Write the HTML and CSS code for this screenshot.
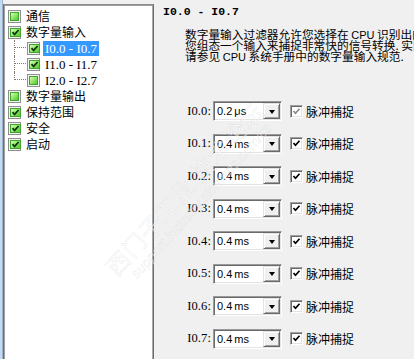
FILE: index.html
```html
<!DOCTYPE html>
<html lang="zh">
<head>
<meta charset="utf-8">
<link rel="stylesheet" href="styles.css">
</head>
<body>
<div class="app">
  <div class="strip"></div>
  <div class="tree">
    <div class="node"><span class="tcb"><span class="in"></span></span><span class="lbl">通信</span></div>
    <div class="node"><span class="tcb on"><span class="in"><svg viewBox="0 0 9 9"><path d="M1.5 4.2 L3.6 6.4 L7.6 2" /></svg></span></span><span class="lbl">数字量输入</span></div>
    <div class="node child"><span class="conn"><span class="h"></span></span><span class="tcb on"><span class="in"><svg viewBox="0 0 9 9"><path d="M1.5 4.2 L3.6 6.4 L7.6 2" /></svg></span></span><span class="lbl sel">I0.0 - I0.7</span></div>
    <div class="node child"><span class="conn"><span class="h"></span></span><span class="tcb on"><span class="in"><svg viewBox="0 0 9 9"><path d="M1.5 4.2 L3.6 6.4 L7.6 2" /></svg></span></span><span class="lbl">I1.0 - I1.7</span></div>
    <div class="node child last"><span class="conn"><span class="h"></span></span><span class="tcb"><span class="in"></span></span><span class="lbl">I2.0 - I2.7</span></div>
    <div class="node"><span class="tcb"><span class="in"></span></span><span class="lbl">数字量输出</span></div>
    <div class="node"><span class="tcb on"><span class="in"><svg viewBox="0 0 9 9"><path d="M1.5 4.2 L3.6 6.4 L7.6 2" /></svg></span></span><span class="lbl">保持范围</span></div>
    <div class="node"><span class="tcb on"><span class="in"><svg viewBox="0 0 9 9"><path d="M1.5 4.2 L3.6 6.4 L7.6 2" /></svg></span></span><span class="lbl">安全</span></div>
    <div class="node"><span class="tcb on"><span class="in"><svg viewBox="0 0 9 9"><path d="M1.5 4.2 L3.6 6.4 L7.6 2" /></svg></span></span><span class="lbl">启动</span></div>
  </div>
  <div class="main">
    <div class="title">I0.0 - I0.7</div>
    <div class="desc">
      <div class="ln">数字量输入过滤器允许您选择在 <span class="lat">CPU</span> 识别出的输入</div>
      <div class="ln">您组态一个输入来捕捉非常快的信号转换. 实际</div>
      <div class="ln">请参见 <span class="lat">CPU</span> 系统手册中的数字量输入规范.</div>
    </div>
    <div class="rows">
      <span class="io">I0.0:</span><span class="combo"><span class="val">0.2 μs</span><span class="btn"><span class="tri"></span></span></span><span class="ck dis"><svg viewBox="0 0 9 9"><path d="M1.5 4 L3.5 6.2 L7.5 1.8" /></svg></span><span class="pc">脉冲捕捉</span>
      <span class="io">I0.1:</span><span class="combo"><span class="val">0.4 ms</span><span class="btn"><span class="tri"></span></span></span><span class="ck"><svg viewBox="0 0 9 9"><path d="M1.5 4 L3.5 6.2 L7.5 1.8" /></svg></span><span class="pc">脉冲捕捉</span>
      <span class="io">I0.2:</span><span class="combo"><span class="val">0.4 ms</span><span class="btn"><span class="tri"></span></span></span><span class="ck"><svg viewBox="0 0 9 9"><path d="M1.5 4 L3.5 6.2 L7.5 1.8" /></svg></span><span class="pc">脉冲捕捉</span>
      <span class="io">I0.3:</span><span class="combo"><span class="val">0.4 ms</span><span class="btn"><span class="tri"></span></span></span><span class="ck"><svg viewBox="0 0 9 9"><path d="M1.5 4 L3.5 6.2 L7.5 1.8" /></svg></span><span class="pc">脉冲捕捉</span>
      <span class="io">I0.4:</span><span class="combo"><span class="val">0.4 ms</span><span class="btn"><span class="tri"></span></span></span><span class="ck"><svg viewBox="0 0 9 9"><path d="M1.5 4 L3.5 6.2 L7.5 1.8" /></svg></span><span class="pc">脉冲捕捉</span>
      <span class="io">I0.5:</span><span class="combo"><span class="val">0.4 ms</span><span class="btn"><span class="tri"></span></span></span><span class="ck"><svg viewBox="0 0 9 9"><path d="M1.5 4 L3.5 6.2 L7.5 1.8" /></svg></span><span class="pc">脉冲捕捉</span>
      <span class="io">I0.6:</span><span class="combo"><span class="val">0.4 ms</span><span class="btn"><span class="tri"></span></span></span><span class="ck"><svg viewBox="0 0 9 9"><path d="M1.5 4 L3.5 6.2 L7.5 1.8" /></svg></span><span class="pc">脉冲捕捉</span>
      <span class="io">I0.7:</span><span class="combo"><span class="val">0.4 ms</span><span class="btn"><span class="tri"></span></span></span><span class="ck"><svg viewBox="0 0 9 9"><path d="M1.5 4 L3.5 6.2 L7.5 1.8" /></svg></span><span class="pc">脉冲捕捉</span>
    </div>
  </div>
</div>
<div class="watermark">
  <div class="wm1">西门子工业 技术论坛</div>
  <div class="wm2">support.industry.siemens.com/cs</div>
</div>
</body>
</html>
```
FILE: styles.css
```css
html, body {
  margin: 0;
  padding: 0;
}
body {
  width: 414px;
  height: 359px;
  overflow: hidden;
  background: #f0f0f0;
  font-family: "Liberation Serif", "Noto Sans CJK SC", serif;
  color: #000;
  position: relative;
}
.app {
  display: flex;
  height: 359px;
}
.strip {
  width: 3px;
  flex: none;
  background: linear-gradient(90deg, #c4daf3 0, #c4daf3 2px, #9fb4cc 2px);
}
.tree {
  width: 151px;
  flex: none;
  margin-top: 4px;
  background: #fff;
  border-left: 1px solid #6d6d6d;
  border-top: 1px solid #8a8a8a;
  border-right: 1px solid #6d6d6d;
  box-shadow: inset 1px 1px 0 #a0a0a0, inset -1px 0 0 #a8a8a8;
  padding: 3px 0 0 2px;
  box-sizing: border-box;
  height: 355px;
}
.node {
  height: 16px;
  display: flex;
  align-items: center;
  font-size: 12px;
  line-height: 16px;
  white-space: nowrap;
}
.tcb {
  width: 13px;
  height: 13px;
  box-sizing: border-box;
  border: 1px solid #8e8f8f;
  background: #f4f4f4;
  padding: 1px;
  margin-left: 2px;
  flex: none;
  display: flex;
}
.tcb .in {
  flex: 1;
  border: 1px solid #3da52a;
  background: linear-gradient(135deg, #d9fbc2 0%, #98e86e 45%, #52c42e 100%);
  display: flex;
  align-items: center;
  justify-content: center;
}
.tcb .in svg {
  width: 9px;
  height: 9px;
}
.tcb .in svg path {
  fill: none;
  stroke: #0d3a10;
  stroke-width: 1.8;
}
.lbl {
  margin-left: 5px;
  font-family: "Liberation Serif", "Noto Sans CJK SC", serif;
  font-size: 13px;
}
.node .lbl {
  font-family: "Noto Sans CJK SC", sans-serif;
  font-size: 12px;
}
.child .lbl {
  font-family: "Liberation Serif", "Noto Sans CJK SC", serif;
  font-size: 13px;
  margin-left: 3px;
  padding: 0 2px;
  line-height: 15px;
}
.lbl.sel {
  background: #3399ff;
  color: #fff;
}
.conn {
  width: 13px;
  height: 16px;
  margin-left: 8px;
  box-sizing: border-box;
  border-left: 1px dotted #7a7a7a;
  position: relative;
  flex: none;
  align-self: flex-start;
}
.child.last .conn {
  height: 8px;
}
.child .tcb {
  margin-left: 0;
}
.conn .h {
  position: absolute;
  left: 0;
  right: 1px;
  top: 7px;
  border-top: 1px dotted #7a7a7a;
}
.main {
  flex: 1;
  padding-left: 9px;
  overflow: hidden;
}
.title {
  margin-top: 5px;
  font-family: "Liberation Mono", monospace;
  font-weight: bold;
  font-size: 11.5px;
  line-height: 13px;
  white-space: pre;
}
.desc {
  margin-top: 10px;
  margin-left: 22px;
  font-family: "Noto Sans CJK SC", sans-serif;
  font-size: 11.7px;
  line-height: 11px;
  white-space: nowrap;
}
.desc .ln {
  height: 11px;
  line-height: 11px;
  overflow: visible;
}
.desc .lat {
  font-family: "Liberation Sans", sans-serif;
  font-size: 11px;
  line-height: 11px;
}
.rows {
  margin-top: 40px;
  margin-left: 22px;
  display: grid;
  grid-template-columns: 26px 69px 13px auto;
  grid-auto-rows: 20px;
  row-gap: 12.5px;
  column-gap: 0;
  align-items: center;
}
.io {
  font-family: "Liberation Serif", serif;
  font-size: 12.5px;
  text-align: right;
  margin-right: -2px;
  padding-right: 2px;
  white-space: nowrap;
  letter-spacing: 0.1px;
}
.combo {
  margin-left: 2px;
  width: 69px;
  height: 20px;
  box-sizing: border-box;
  border: 1px solid;
  border-color: #9a9a9a #fff #fff #9a9a9a;
  box-shadow: inset 1px 1px 0 #6a6a6a, inset -1px -1px 0 #e3e3e3;
  background: #fff;
  display: flex;
  align-items: center;
  padding: 1px 1px 1px 3px;
}
.val {
  flex: 1;
  font-family: "Liberation Sans", sans-serif;
  font-size: 11px;
  word-spacing: -1px;
}
.btn {
  width: 17px;
  height: 16px;
  box-sizing: border-box;
  background: #f0f0f0;
  border: 1px solid;
  border-color: #e3e3e3 #696969 #696969 #e3e3e3;
  box-shadow: inset 1px 1px 0 #fff, inset -1px -1px 0 #a0a0a0;
  display: flex;
  align-items: center;
  justify-content: center;
}
.tri {
  width: 0;
  height: 0;
  border-left: 3.5px solid transparent;
  border-right: 3.5px solid transparent;
  border-top: 4px solid #000;
  margin-top: 1px;
}
.ck {
  margin-left: 10px;
  width: 13px;
  height: 13px;
  box-sizing: border-box;
  border: 1px solid;
  border-color: #a0a0a0 #fff #fff #a0a0a0;
  box-shadow: inset 1px 1px 0 #696969, inset -1px -1px 0 #e3e3e3;
  background: #fff;
  display: flex;
  align-items: center;
  justify-content: center;
}
.ck svg {
  width: 9px;
  height: 9px;
}
.ck svg path {
  fill: none;
  stroke: #000;
  stroke-width: 1.7;
}
.ck.dis svg path {
  stroke: #8a8a8a;
}
.pc {
  margin-left: 13px;
  font-family: "Noto Sans CJK SC", sans-serif;
  font-size: 12px;
  white-space: nowrap;
}
.watermark {
  position: absolute;
  left: 100px;
  top: 262px;
  transform: rotate(-48deg);
  transform-origin: 0 0;
  pointer-events: none;
  white-space: nowrap;
}
.wm1 {
  font-family: "Noto Sans CJK SC", sans-serif;
  font-size: 23px;
  line-height: 26px;
  color: rgba(255, 255, 255, 0.55);
  -webkit-text-stroke: 0.6px rgba(100, 100, 100, 0.14);
  letter-spacing: 1px;
}
.wm2 {
  font-family: "Liberation Sans", sans-serif;
  font-style: italic;
  font-size: 14px;
  line-height: 16px;
  color: rgba(255, 255, 255, 0.55);
  -webkit-text-stroke: 0.5px rgba(100, 100, 100, 0.14);
  margin-left: 12px;
}
```
